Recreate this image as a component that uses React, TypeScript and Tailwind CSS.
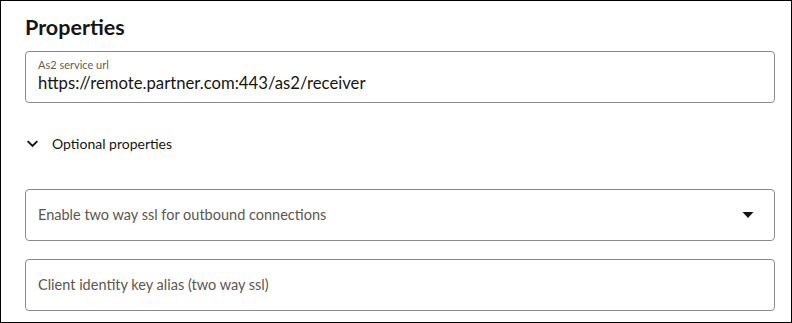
export default function App() {
  return (
    <div
      className="w-[792px] h-[323px] border border-black bg-white pl-6 pr-4 overflow-hidden"
      style={{ fontFamily: 'Lato, "Noto Sans", sans-serif' }}
    >
      <h1 className="pt-[12px] text-[21.5px] leading-[28px] font-bold text-[#161513]">Properties</h1>

      <div className="mt-[10px] h-[52px] w-[750px] rounded-[4px] border border-[#8b8b8b] px-3 pt-[6px]">
        <div className="text-[11px] leading-[14px] text-[#665c50]">As2 service url</div>
        <div className="text-[16.7px] leading-[22px] text-[#161513]">https://remote.partner.com:443/as2/receiver</div>
      </div>

      <div className="mt-[28px] flex items-center gap-[13px] h-[24px] text-[14px] text-[#161513]">
        <svg width="13" height="13" viewBox="0 0 12 12" className="ml-[1px]">
          <path d="M1.5 3.8 6 8.3l4.5-4.5" fill="none" stroke="#161513" strokeWidth="1.8" />
        </svg>
        <span>Optional properties</span>
      </div>

      <div className="mt-[34px] flex h-[52px] w-[750px] items-center justify-between rounded-[4px] border border-[#8b8b8b] pl-3 pr-5">
        <span className="text-[14.5px] text-[#5c5650]">Enable two way ssl for outbound connections</span>
        <svg width="12" height="8" viewBox="0 0 12 8">
          <path d="M0.5 1h11L6 7z" fill="#161513" />
        </svg>
      </div>

      <div className="mt-[18px] flex h-[52px] w-[750px] items-center rounded-[4px] border border-[#8b8b8b] px-3">
        <span className="text-[14.5px] text-[#5c5650]">Client identity key alias (two way ssl)</span>
      </div>
    </div>
  );
}
